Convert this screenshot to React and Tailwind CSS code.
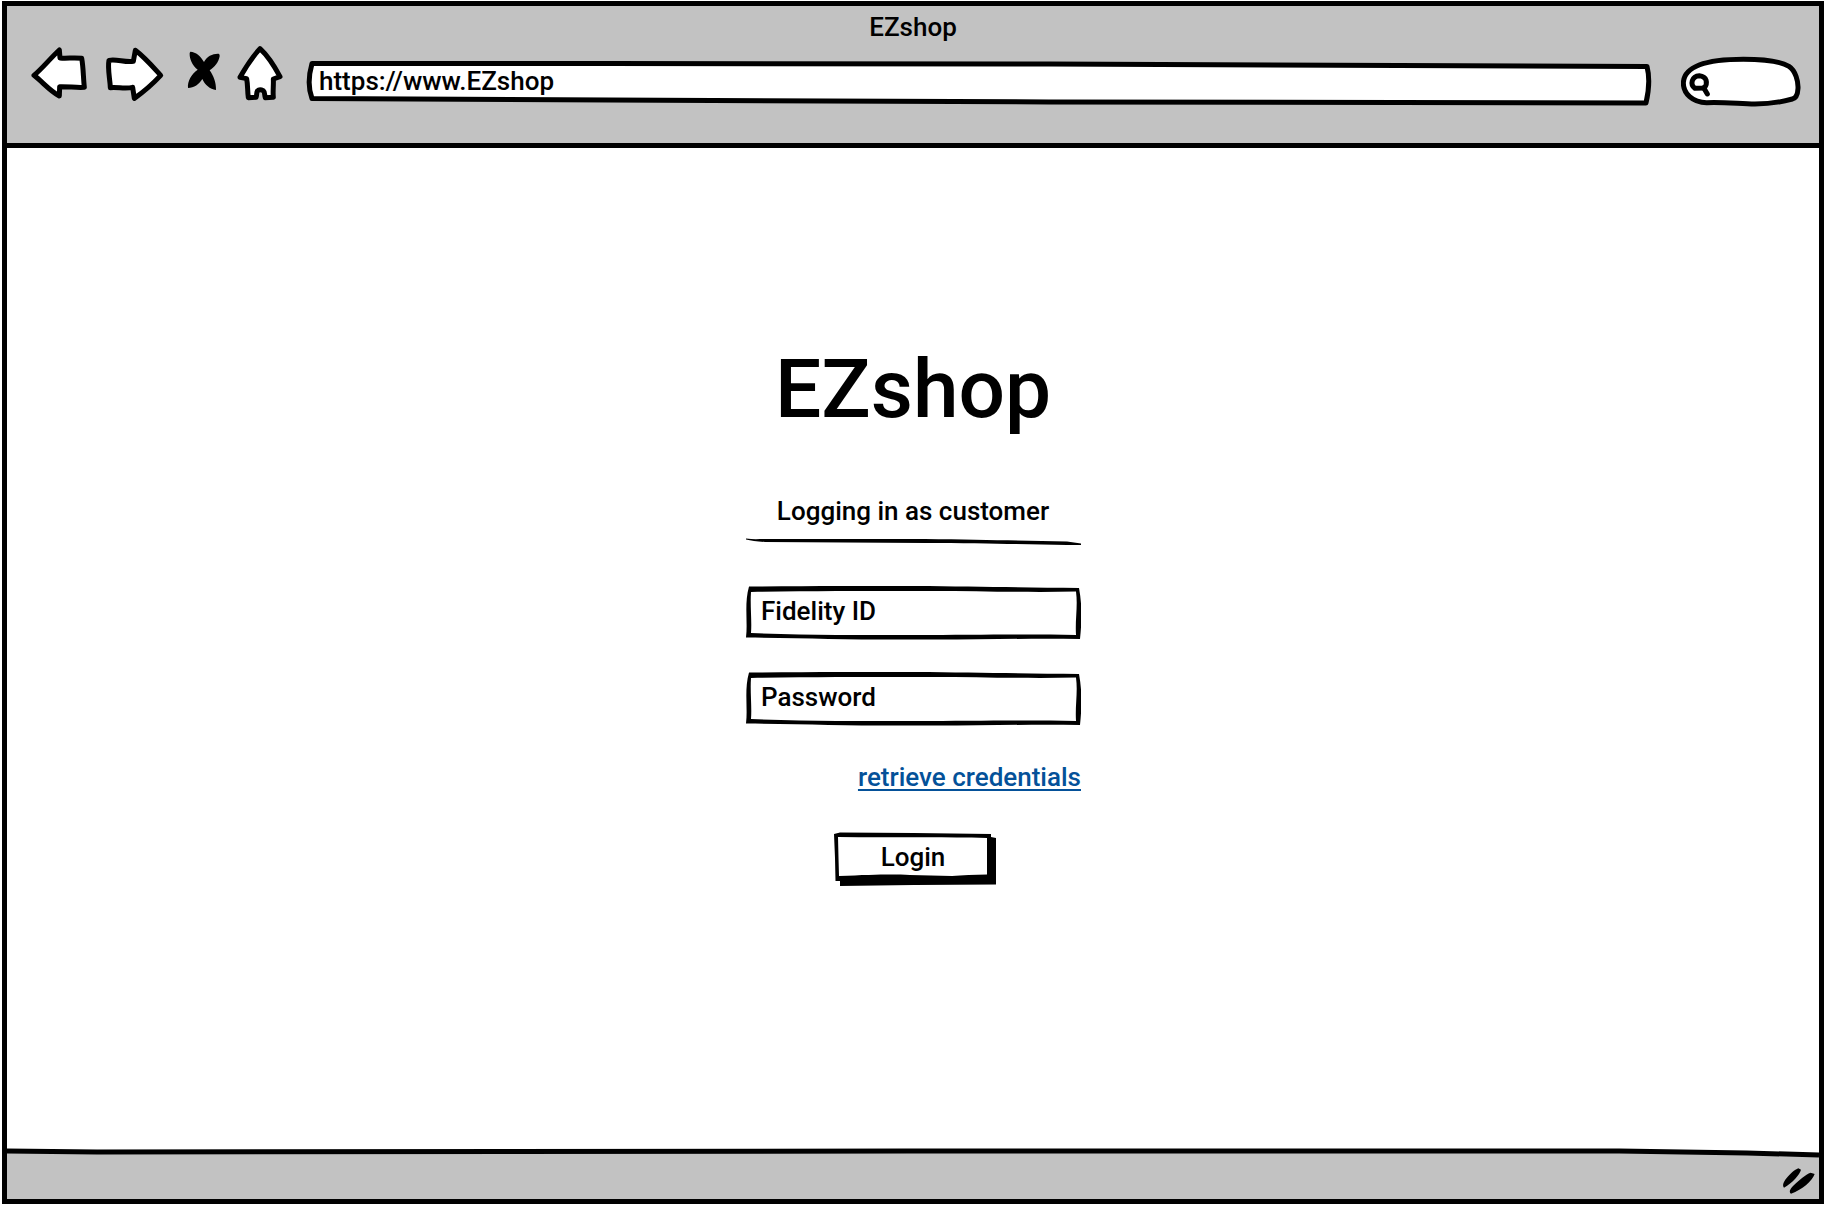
function BackIcon() {
  return (
    <svg viewBox="93 138 174 168" className="h-14 w-[58px]" aria-hidden="true">
      <path
        d="M102 226 C128 204 150 176 178 150 L180 174 C202 176 222 172 245 175 C250 200 250 236 253 262 C228 264 206 259 179 260 L178 288 C148 272 128 246 102 226Z"
        fill="#fff"
        stroke="#000"
        strokeWidth="15"
        strokeLinejoin="round"
      />
    </svg>
  );
}

function ForwardIcon() {
  return (
    <svg viewBox="315 138 180 168" className="h-14 w-[60px]" aria-hidden="true">
      <path
        d="M327 181 C350 176 374 188 400 184 L406 151 C434 172 458 200 482 226 C458 252 430 276 403 295 L398 262 C376 267 354 261 331 263 C330 236 322 206 327 181Z"
        fill="#fff"
        stroke="#000"
        strokeWidth="15"
        strokeLinejoin="round"
      />
    </svg>
  );
}

function StopIcon() {
  return (
    <svg viewBox="543 138 120 168" className="h-14 w-10" aria-hidden="true">
      <path
        d="M571 155 C588 156 602 168 612 186 C620 168 640 160 656 161 Q660 163 659 169 C656 186 644 202 629 211 C640 226 649 248 648 270 C630 268 614 254 607 237 C598 252 582 264 564 264 C562 244 574 222 593 209 C576 196 568 176 569 159Z"
        fill="#000"
      />
    </svg>
  );
}

function HomeIcon() {
  return (
    <svg viewBox="711 138 144 168" className="h-14 w-12" aria-hidden="true">
      <path
        d="M780 146 C804 168 824 200 840 230 L820 237 C821 256 818 276 820 292 L796 293 C793 286 795 276 790 272 C784 269 776 269 772 273 C769 278 771 286 768 292 L745 293 C742 274 744 256 740 236 L720 232 C738 200 758 170 780 146Z"
        fill="#fff"
        stroke="#000"
        strokeWidth="15"
        strokeLinejoin="round"
      />
    </svg>
  );
}

function AddressOutline() {
  return (
    <svg
      viewBox="0 0 1344 48"
      preserveAspectRatio="none"
      className="pointer-events-none absolute inset-0 h-full w-full overflow-visible"
      aria-hidden="true"
    >
      <path
        d="M3 3.5 L300 3.5 L740 4 L1338 6.5 C1341 18 1340 30 1337 43 L740 42 L300 40 L3 38.5 C-1 28 0 14 3 3.5Z"
        fill="#fff"
        stroke="#000"
        strokeWidth="5"
        strokeLinejoin="round"
        vectorEffect="non-scaling-stroke"
      />
    </svg>
  );
}

function SearchOutline() {
  return (
    <svg
      viewBox="18 18 366 156"
      className="pointer-events-none absolute inset-0 h-full w-full"
      fill="none"
      stroke="#000"
      strokeLinejoin="round"
      strokeLinecap="round"
      aria-hidden="true"
    >
      <path
        d="M95 158 C52 158 25 130 25 99 C27 50 95 28 205 28 C270 28 320 36 342 49 C362 62 370 95 369 115 C368 134 362 145 352 147 C320 156 285 162 240 162 C180 160 140 156 95 158Z"
        fill="#fff"
        strokeWidth="15"
      />
      <path d="M60 115 C44 104 50 78 73 77 C96 79 99 100 88 114Z" strokeWidth="15" />
      <path d="M86 113 L97 132" strokeWidth="15" />
    </svg>
  );
}

function FieldOutline() {
  return (
    <svg
      viewBox="0 0 336 54"
      preserveAspectRatio="none"
      className="pointer-events-none absolute inset-0 h-full w-full"
      aria-hidden="true"
    >
      <path
        d="M4 0.5 C60 0 120 0 170 0 C230 0.5 280 1.5 334 2 C337 18 337 34 335 53 C280 52 230 54 170 53.5 C110 54 60 52 1 51.5 C3 36 -1 18 4 0.5Z M6 6 C5 20 7 34 6 47 C60 49 110 49 170 49 C230 49 280 48 331 49 C330 34 333 20 331 5.5 C280 7 230 4.5 170 5 C110 5 60 5 6 6Z"
        fill="#000"
        fillRule="evenodd"
      />
    </svg>
  );
}

function Field({ type, label }) {
  return (
    <div className="relative h-[54px] w-full">
      <input
        type={type}
        aria-label={label}
        placeholder={label}
        className="h-full w-full bg-white pr-4 pb-1 pl-4 placeholder:text-black placeholder:opacity-100 focus:outline-none"
      />
      <FieldOutline />
    </div>
  );
}

export default function App() {
  return (
    <div className="flex min-h-screen flex-col bg-white px-0.5 pt-px pb-0.5 font-['Roboto','Liberation_Sans',sans-serif] text-[26px] leading-8 font-medium text-black">
      <div className="flex flex-1 flex-col border-[5px] border-black">
        <header className="border-b-[5px] border-black bg-[#c2c2c2] pt-[5px]">
          <p className="text-center">EZshop</p>
          <div className="flex gap-6 pt-[3px] pr-4 pb-[35px] pl-6">
            <nav className="flex gap-4" aria-label="Browser">
              <button type="button" aria-label="Back" className="h-14">
                <BackIcon />
              </button>
              <button type="button" aria-label="Forward" className="h-14">
                <ForwardIcon />
              </button>
              <button type="button" aria-label="Stop" className="h-14">
                <StopIcon />
              </button>
              <button type="button" aria-label="Home" className="h-14">
                <HomeIcon />
              </button>
            </nav>
            <div className="relative mt-3.5 h-12 flex-1">
              <AddressOutline />
              <input
                type="text"
                aria-label="Address"
                defaultValue="https://www.EZshop"
                className="relative h-full w-full bg-transparent pr-3 pb-1.5 pl-2.5 focus:outline-none"
              />
            </div>
            <div className="relative mt-2.5 ml-1 h-[52px] w-[122px]">
              <SearchOutline />
              <input
                type="search"
                aria-label="Search"
                className="relative h-full w-full bg-transparent pr-4 pl-9 focus:outline-none"
              />
            </div>
          </div>
        </header>

        <main className="flex flex-1 flex-col items-center pt-[193px]">
          <form className="flex w-[336px] flex-col items-center" onSubmit={(e) => e.preventDefault()}>
            <h1 className="text-[82px] leading-24">EZshop</h1>
            <p className="mt-[58px]">Logging in as customer</p>
            <svg viewBox="0 0 336 8" preserveAspectRatio="none" className="mt-[11px] h-2 w-full" aria-hidden="true">
              <path
                d="M1 0.5 C8 1.5 14 1 20 1 L180 1 C240 1.5 280 3 322 3.5 L336 5.5 L336 7 L322 7 C280 6 240 5.5 180 5 L20 4 C12 3.5 6 2.5 1 1.5Z"
                fill="#000"
              />
            </svg>
            <div className="mt-10 w-full">
              <Field type="text" label="Fidelity ID" />
            </div>
            <div className="mt-8 w-full">
              <Field type="password" label="Password" />
            </div>
            <a
              href="#retrieve"
              className="mt-[35px] self-end text-[#045199] underline decoration-2 underline-offset-3"
            >
              retrieve credentials
            </a>
            <button type="submit" className="relative mt-[39px] h-[54px] w-[158px] pb-1">
              <svg
                viewBox="0 0 158 54"
                className="pointer-events-none absolute inset-0 h-full w-full overflow-visible"
                aria-hidden="true"
              >
                <path
                  d="M0 2 L6 0.5 L80 1 L157 2 L157 5 L162 6 L162 52.5 L80 53 L6 54 L6 49 L1.5 49 L1 26Z"
                  fill="#000"
                />
                <path
                  d="M4 5 C50 6 100 4.5 153 6 L153 42.5 C140 43 128 43 118 44 L76 43 C60 42 40 42.5 5 44 L4.5 26Z"
                  fill="#fff"
                />
              </svg>
              <span className="relative">Login</span>
            </button>
          </form>
        </main>

        <footer className="flex h-[51px] flex-col bg-[#c2c2c2]">
          <svg viewBox="0 0 1812 12" preserveAspectRatio="none" className="h-3 w-full" aria-hidden="true">
            <path d="M0 0 L1812 0 L1812 7 L1612 3 L900 2 L0 3Z" fill="#fff" />
            <path
              d="M0 3 L90 4 L900 3 L1612 3 L1740 5 L1812 7"
              fill="none"
              stroke="#000"
              strokeWidth="5"
              vectorEffect="non-scaling-stroke"
            />
          </svg>
          <svg viewBox="468 141 102 84" className="mt-[7px] mr-[3px] h-7 w-[34px] self-end" aria-hidden="true">
            <path
              d="M517 145 L525 149 C521 164 500 188 474 203 C468 197 473 184 482 174 C492 162 506 149 517 145Z M554 158 L566 162 C558 184 530 208 495 221 C487 215 494 203 505 194 C520 181 538 163 554 158Z"
              fill="#000"
            />
          </svg>
        </footer>
      </div>
    </div>
  );
}
